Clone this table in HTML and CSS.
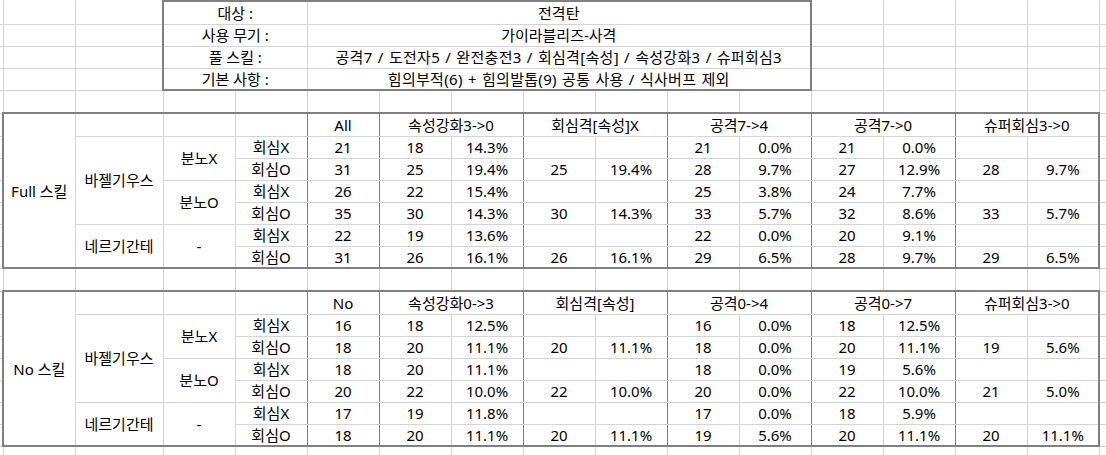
FILE: index.html
```html
<!DOCTYPE html>
<html lang="ko">
<head>
<meta charset="utf-8">
<title>전격탄 비교</title>
<link rel="stylesheet" href="styles.css">
</head>
<body>
<table class="sheet">
<colgroup>
<col class="w3"><col class="w72"><col class="w88">
<col class="w72"><col class="w72"><col class="w72"><col class="w72"><col class="w72"><col class="w72"><col class="w72">
<col class="w72"><col class="w72"><col class="w72"><col class="w72"><col class="w72"><col class="w72"><col class="w7">
</colgroup>
<tbody>
<tr class="h23"><td></td><td></td><td></td><td colspan="2" class="L T">대상 :</td><td colspan="7" class="T R">전격탄</td><td></td><td></td><td></td><td></td><td></td></tr>
<tr><td></td><td></td><td></td><td colspan="2" class="L">사용 무기 :</td><td colspan="7" class="R">가이라블리즈-사격</td><td></td><td></td><td></td><td></td><td></td></tr>
<tr><td></td><td></td><td></td><td colspan="2" class="L">풀 스킬 :</td><td colspan="7" class="R wide">공격7 / 도전자5 / 완전충전3 / 회심격[속성] / 속성강화3 / 슈퍼회심3</td><td></td><td></td><td></td><td></td><td></td></tr>
<tr><td></td><td></td><td></td><td colspan="2" class="L B">기본 사항 :</td><td colspan="7" class="R B wide">힘의부적(6) + 힘의발톱(9) 공통 사용 / 식사버프 제외</td><td></td><td></td><td></td><td></td><td></td></tr>
<tr class="h23"><td></td><td></td><td></td><td></td><td></td><td></td><td></td><td></td><td></td><td></td><td></td><td></td><td></td><td></td><td></td><td></td><td></td></tr>

<tr class="h23"><td></td><td rowspan="7" class="L T B">Full 스킬</td><td class="T"></td><td class="T"></td><td class="T s"></td><td class="T s">All</td><td colspan="2" class="T s">속성강화3-&gt;0</td><td colspan="2" class="T s">회심격[속성]X</td><td colspan="2" class="T s">공격7-&gt;4</td><td colspan="2" class="T s">공격7-&gt;0</td><td colspan="2" class="T R">슈퍼회심3-&gt;0</td><td></td></tr>
<tr><td></td><td rowspan="4">바젤기우스</td><td rowspan="2">분노X</td><td class="s">회심X</td><td class="s">21</td><td>18</td><td class="s">14.3%</td><td></td><td class="s"></td><td>21</td><td class="s">0.0%</td><td>21</td><td class="s">0.0%</td><td></td><td class="R"></td><td></td></tr>
<tr><td></td><td class="s">회심O</td><td class="s">31</td><td>25</td><td class="s">19.4%</td><td>25</td><td class="s">19.4%</td><td>28</td><td class="s">9.7%</td><td>27</td><td class="s">12.9%</td><td>28</td><td class="R">9.7%</td><td></td></tr>
<tr><td></td><td rowspan="2">분노O</td><td class="s">회심X</td><td class="s">26</td><td>22</td><td class="s">15.4%</td><td></td><td class="s"></td><td>25</td><td class="s">3.8%</td><td>24</td><td class="s">7.7%</td><td></td><td class="R"></td><td></td></tr>
<tr><td></td><td class="s">회심O</td><td class="s">35</td><td>30</td><td class="s">14.3%</td><td>30</td><td class="s">14.3%</td><td>33</td><td class="s">5.7%</td><td>32</td><td class="s">8.6%</td><td>33</td><td class="R">5.7%</td><td></td></tr>
<tr><td></td><td rowspan="2" class="B">네르기간테</td><td rowspan="2" class="B">-</td><td class="s">회심X</td><td class="s">22</td><td>19</td><td class="s">13.6%</td><td></td><td class="s"></td><td>22</td><td class="s">0.0%</td><td>20</td><td class="s">9.1%</td><td></td><td class="R"></td><td></td></tr>
<tr><td></td><td class="s B">회심O</td><td class="s B">31</td><td class="B">26</td><td class="s B">16.1%</td><td class="B">26</td><td class="s B">16.1%</td><td class="B">29</td><td class="s B">6.5%</td><td class="B">28</td><td class="s B">9.7%</td><td class="B">29</td><td class="R B">6.5%</td><td></td></tr>

<tr class="h23"><td></td><td></td><td></td><td></td><td></td><td></td><td></td><td></td><td></td><td></td><td></td><td></td><td></td><td></td><td></td><td></td><td></td></tr>

<tr class="h23"><td></td><td rowspan="7" class="L T B">No 스킬</td><td class="T"></td><td class="T"></td><td class="T s"></td><td class="T s">No</td><td colspan="2" class="T s">속성강화0-&gt;3</td><td colspan="2" class="T s">회심격[속성]</td><td colspan="2" class="T s">공격0-&gt;4</td><td colspan="2" class="T s">공격0-&gt;7</td><td colspan="2" class="T R">슈퍼회심3-&gt;0</td><td></td></tr>
<tr><td></td><td rowspan="4">바젤기우스</td><td rowspan="2">분노X</td><td class="s">회심X</td><td class="s">16</td><td>18</td><td class="s">12.5%</td><td></td><td class="s"></td><td>16</td><td class="s">0.0%</td><td>18</td><td class="s">12.5%</td><td></td><td class="R"></td><td></td></tr>
<tr><td></td><td class="s">회심O</td><td class="s">18</td><td>20</td><td class="s">11.1%</td><td>20</td><td class="s">11.1%</td><td>18</td><td class="s">0.0%</td><td>20</td><td class="s">11.1%</td><td>19</td><td class="R">5.6%</td><td></td></tr>
<tr><td></td><td rowspan="2">분노O</td><td class="s">회심X</td><td class="s">18</td><td>20</td><td class="s">11.1%</td><td></td><td class="s"></td><td>18</td><td class="s">0.0%</td><td>19</td><td class="s">5.6%</td><td></td><td class="R"></td><td></td></tr>
<tr><td></td><td class="s">회심O</td><td class="s">20</td><td>22</td><td class="s">10.0%</td><td>22</td><td class="s">10.0%</td><td>20</td><td class="s">0.0%</td><td>22</td><td class="s">10.0%</td><td>21</td><td class="R">5.0%</td><td></td></tr>
<tr><td></td><td rowspan="2" class="B">네르기간테</td><td rowspan="2" class="B">-</td><td class="s">회심X</td><td class="s">17</td><td>19</td><td class="s">11.8%</td><td></td><td class="s"></td><td>17</td><td class="s">0.0%</td><td>18</td><td class="s">5.9%</td><td></td><td class="R"></td><td></td></tr>
<tr><td></td><td class="s B">회심O</td><td class="s B">18</td><td class="B">20</td><td class="s B">11.1%</td><td class="B">20</td><td class="s B">11.1%</td><td class="B">19</td><td class="s B">5.6%</td><td class="B">20</td><td class="s B">11.1%</td><td class="B">20</td><td class="R B">11.1%</td><td></td></tr>

<tr><td></td><td></td><td></td><td></td><td></td><td></td><td></td><td></td><td></td><td></td><td></td><td></td><td></td><td></td><td></td><td></td><td></td></tr>
</tbody>
</table>
</body>
</html>
```

FILE: styles.css
```css
html, body {
  margin: 0;
  padding: 0;
  overflow: hidden;
  background: #ffffff;
}

.sheet {
  border-collapse: collapse;
  table-layout: fixed;
  width: 1106px;
  font-family: "Noto Sans", "Noto Sans CJK KR", sans-serif;
  font-size: 15px;
  color: #000000;
}

.w3 { width: 3px; }
.w7 { width: 7px; }
.w72 { width: 72px; }
.w88 { width: 88px; }

.sheet tr { height: 22px; }
.sheet tr.h23 { height: 23px; }

.sheet td {
  padding: 0;
  border: none;
  border-right: 1px solid #d4d4d4;
  border-bottom: 1px solid #d4d4d4;
  text-align: center;
  vertical-align: middle;
  white-space: nowrap;
  overflow: hidden;
  line-height: 20px;
}

.sheet td.wide {
  word-spacing: 1px;
  letter-spacing: 0.3px;
}

.sheet td.s { border-right: 1px solid #808080; }
.sheet td.L { border-left: 2px solid #808080; }
.sheet td.T { border-top: 2px solid #808080; }
.sheet td.R { border-right: 2px solid #808080; }
.sheet td.B { border-bottom: 2px solid #808080; }
```
